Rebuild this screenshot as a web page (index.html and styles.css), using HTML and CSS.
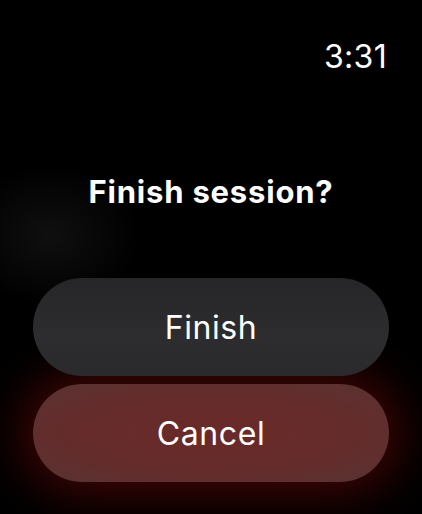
FILE: index.html
```html
<!DOCTYPE html>
<html>
<head>
<meta charset="utf-8">
<link rel="stylesheet" href="styles.css">
</head>
<body>
<div class="screen">
  <div class="status"><span class="time">3:31</span></div>
  <h1 class="title">Finish session?</h1>
  <div class="actions">
    <button class="btn btn-finish">Finish</button>
    <button class="btn btn-cancel">Cancel</button>
  </div>
</div>
</body>
</html>
```
FILE: styles.css
```css
html, body {
  margin: 0;
  padding: 0;
  background: #000;
}
.screen {
  width: 422px;
  height: 514px;
  overflow: hidden;
  display: flex;
  flex-direction: column;
  background:
    radial-gradient(ellipse 90px 70px at 50px 235px, rgba(28,28,28,0.55), rgba(0,0,0,0) 100%),
    #000;
  font-family: "Inter", "Roboto", sans-serif;
  color: #fff;
}
.status {
  display: flex;
  justify-content: flex-end;
  padding: 38px 35px 0 0;
}
.time {
  font-size: 32px;
  line-height: 38px;
  font-weight: 400;
  letter-spacing: 0.3px;
}
.title {
  margin: 97px 0 0;
  text-align: center;
  font-size: 31px;
  line-height: 38px;
  font-weight: 700;
  letter-spacing: 0.8px;
}
.actions {
  display: flex;
  flex-direction: column;
  gap: 8px;
  margin: 67px 33px 0;
}
.btn {
  height: 98px;
  border: none;
  border-radius: 49px;
  font-family: inherit;
  font-size: 32px;
  font-weight: 400;
  color: #fff;
  letter-spacing: 0.6px;
  padding: 0;
}
.btn-finish {
  position: relative;
  z-index: 1;
  background: linear-gradient(180deg, #262628 0%, #2d2d2f 60%, #2a2a2c 100%);
}
.btn-cancel {
  background: radial-gradient(ellipse at 50% 50%, #6a2a29 0%, #632c2b 60%, #573433 100%);
  box-shadow: 0 0 50px 10px rgba(115, 10, 8, 0.6);
}
```
